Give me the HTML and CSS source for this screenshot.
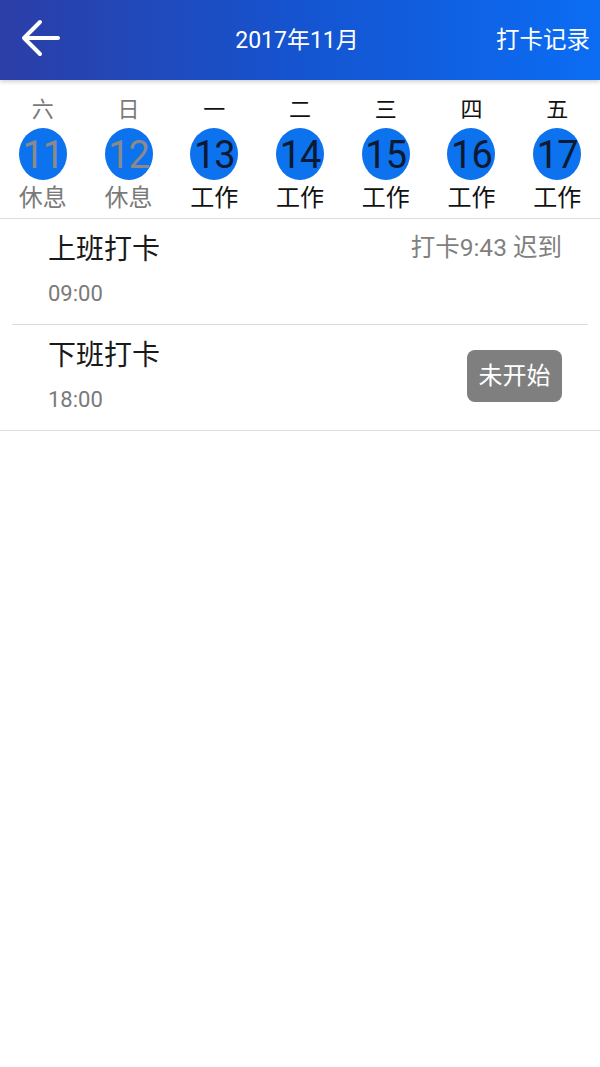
FILE: index.html
```html
<!DOCTYPE html>
<html lang="zh">
<head>
    <meta charset="UTF-8">
    <meta name="viewport" content="width=device-width, initial-scale=1.0">
    <title>打卡</title>
    <link rel="stylesheet" href="styles.css">
</head>
<body>
    <!-- Barre du haut -->
    <div class="topbar">
        <div class="back">
            <svg width="40" height="40" viewBox="0 0 40 40">
                <path d="M4 19 H38 M20 3 L4 19 L20 35" fill="none" stroke="#fff" stroke-width="4" stroke-linecap="round" stroke-linejoin="round"/>
            </svg>
        </div>
        <div class="title">2017年11月</div>
        <div class="action">打卡记录</div>
    </div>

    <!-- Semaine -->
    <div class="week">
        <div class="day rest"><span class="wd">六</span><span class="num">11</span><span class="st">休息</span></div>
        <div class="day rest"><span class="wd">日</span><span class="num">12</span><span class="st">休息</span></div>
        <div class="day"><span class="wd">一</span><span class="num">13</span><span class="st">工作</span></div>
        <div class="day"><span class="wd">二</span><span class="num">14</span><span class="st">工作</span></div>
        <div class="day"><span class="wd">三</span><span class="num">15</span><span class="st">工作</span></div>
        <div class="day"><span class="wd">四</span><span class="num">16</span><span class="st">工作</span></div>
        <div class="day"><span class="wd">五</span><span class="num">17</span><span class="st">工作</span></div>
    </div>

    <!-- Pointages -->
    <div class="records">
        <div class="record">
            <div class="info">
                <div class="name">上班打卡</div>
                <div class="time">09:00</div>
            </div>
            <div class="done">打卡9:43 迟到</div>
        </div>
        <div class="record">
            <div class="info">
                <div class="name">下班打卡</div>
                <div class="time">18:00</div>
            </div>
            <div class="badge">未开始</div>
        </div>
    </div>
</body>
</html>
```

FILE: styles.css
```css
body {
    margin: 0;
    font-family: Roboto, "Noto Sans CJK SC", sans-serif;
    background-color: #fff;
    color: #1a1a1a;
}
.topbar {
    height: 80px;
    display: flex;
    align-items: center;
    padding: 0 10px 0 20px;
    background: linear-gradient(to right, #2c3ea7, #1554d0 50%, #0b6df4);
    color: #fff;
    box-shadow: 0 2px 4px rgba(0, 0, 0, 0.18);
    position: relative;
}
.back {
    width: 40px;
    height: 40px;
    margin-top: -2px;
}
.title {
    flex: 1;
    text-align: center;
    font-size: 23px;
    margin-left: 38px;
    margin-top: -4px;
}
.action {
    font-size: 23.5px;
    margin-top: -4px;
}
.week {
    display: grid;
    grid-template-columns: repeat(7, 1fr);
    padding: 16px 0 5px;
    border-bottom: 1px solid #dcdcdc;
}
.day {
    display: flex;
    flex-direction: column;
    align-items: center;
}
.wd {
    font-size: 22px;
    line-height: 28px;
    color: #111;
}
.num {
    width: 48px;
    height: 52px;
    margin-top: 4px;
    border-radius: 50%;
    background-color: #0c72ee;
    font-size: 38px;
    line-height: 54px;
    letter-spacing: -1px;
    text-align: center;
    color: #0d1a33;
}
.st {
    font-size: 24px;
    line-height: 30px;
    margin-top: 3px;
    color: #111;
}
.rest .wd,
.rest .st {
    color: #7a7a7a;
}
.rest .num {
    color: #8a8a8a;
}
.records {
    border-bottom: 1px solid #dcdcdc;
}
.record {
    margin: 0 12px;
    padding: 13px 26px 16px 36px;
    display: flex;
    align-items: center;
    justify-content: space-between;
}
.record + .record {
    border-top: 1px solid #dcdcdc;
}
.name {
    font-size: 28px;
    line-height: 36px;
}
.time {
    font-size: 22px;
    line-height: 28px;
    margin-top: 12px;
    color: #7a7a7a;
}
.done {
    align-self: flex-start;
    font-size: 24.5px;
    line-height: 32px;
    color: #808080;
}
.badge {
    width: 95px;
    height: 52px;
    line-height: 52px;
    text-align: center;
    border-radius: 8px;
    background-color: #7f7f7f;
    color: #fff;
    font-size: 24px;
}
```
